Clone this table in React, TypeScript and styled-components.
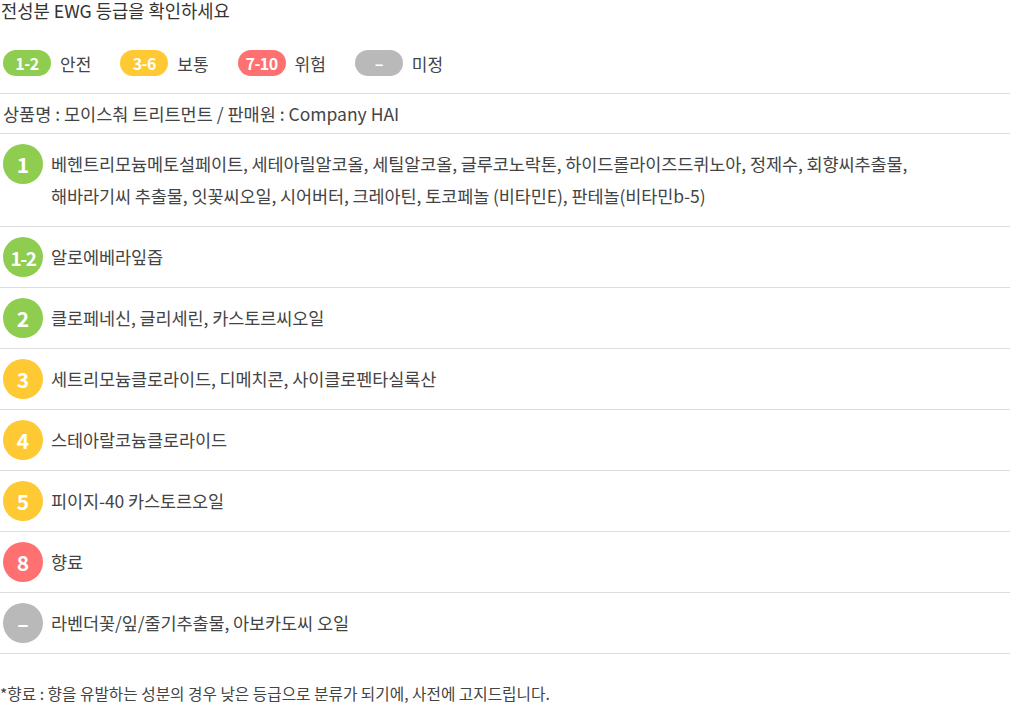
import React from "react";
import styled, { createGlobalStyle } from "styled-components";

type Grade = "safe" | "normal" | "danger" | "none";

const gradeColors: Record<Grade, string> = {
  safe: "#8ecd50",
  normal: "#ffc933",
  danger: "#ff7171",
  none: "#b9b9b9",
};

interface Ingredient {
  score: string;
  grade: Grade;
  names: string;
}

const legend: { label: string; text: string; grade: Grade }[] = [
  { label: "1-2", text: "안전", grade: "safe" },
  { label: "3-6", text: "보통", grade: "normal" },
  { label: "7-10", text: "위험", grade: "danger" },
  { label: "–", text: "미정", grade: "none" },
];

const ingredients: Ingredient[] = [
  {
    score: "1",
    grade: "safe",
    names:
      "베헨트리모늄메토설페이트, 세테아릴알코올, 세틸알코올, 글루코노락톤, 하이드롤라이즈드퀴노아, 정제수, 회향씨추출물, 해바라기씨 추출물, 잇꽃씨오일, 시어버터, 크레아틴, 토코페놀 (비타민E), 판테놀(비타민b-5)",
  },
  { score: "1-2", grade: "safe", names: "알로에베라잎즙" },
  { score: "2", grade: "safe", names: "클로페네신, 글리세린, 카스토르씨오일" },
  { score: "3", grade: "normal", names: "세트리모늄클로라이드, 디메치콘, 사이클로펜타실록산" },
  { score: "4", grade: "normal", names: "스테아랄코늄클로라이드" },
  { score: "5", grade: "normal", names: "피이지-40 카스토르오일" },
  { score: "8", grade: "danger", names: "향료" },
  { score: "–", grade: "none", names: "라벤더꽃/잎/줄기추출물, 아보카도씨 오일" },
];

const App = () => {
  return (
    <>
      <GlobalStyle />
      <Page>
        <Title>전성분 EWG 등급을 확인하세요</Title>
        <Legend>
          {legend.map((item) => (
            <LegendItem key={item.text}>
              <Pill $grade={item.grade}>{item.label}</Pill>
              <LegendText>{item.text}</LegendText>
            </LegendItem>
          ))}
        </Legend>
        <ProductInfo>상품명 : 모이스춰 트리트먼트 / 판매원 : Company HAI</ProductInfo>
        <List>
          {ingredients.map((item) => (
            <Row key={item.score}>
              <Badge $grade={item.grade} $small={item.score.length > 2}>
                {item.score}
              </Badge>
              <Names>{item.names}</Names>
            </Row>
          ))}
        </List>
        <Notice>
          <strong>*향료</strong> : 향을 유발하는 성분의 경우 낮은 등급으로 분류가 되기에, 사전에 고지드립니다.
        </Notice>
      </Page>
    </>
  );
};

export default App;

const GlobalStyle = createGlobalStyle`
  html, body {
    margin: 0;
    padding: 0;
    background: #fff;
  }
  body {
    font-family: "Noto Sans CJK KR", "Noto Sans", sans-serif;
    color: #444;
  }
`;

const Page = styled.div`
  width: 1010px;
  display: flex;
  flex-direction: column;
`;

const Title = styled.h2`
  margin: 0;
  padding-left: 1px;
  height: 22px;
  line-height: 21px;
  font-size: 17.7px;
  font-weight: 400;
  color: #333;
`;

const Legend = styled.div`
  display: flex;
  align-items: center;
  gap: 29px;
  padding: 28px 0 17px 3px;
  border-bottom: 1px solid #ddd;
`;

const LegendItem = styled.div`
  display: flex;
  align-items: center;
  gap: 9px;
`;

const Pill = styled.span<{ $grade: Grade }>`
  display: inline-flex;
  align-items: center;
  justify-content: center;
  min-width: 48px;
  height: 26px;
  padding: 0 4px;
  box-sizing: border-box;
  border-radius: 13px;
  background: ${({ $grade }) => gradeColors[$grade]};
  color: #fff;
  font-size: 16px;
  font-weight: 700;
  letter-spacing: -0.5px;
`;

const LegendText = styled.span`
  font-size: 17px;
  color: #444;
`;

const ProductInfo = styled.div`
  height: 39px;
  line-height: 39px;
  padding-left: 3px;
  font-size: 17.5px;
  color: #444;
  border-bottom: 1px solid #ddd;
`;

const List = styled.ul`
  list-style: none;
  margin: 0;
  padding: 0;
`;

const Row = styled.li`
  display: flex;
  align-items: flex-start;
  gap: 8px;
  padding: 10px 0 10px 3px;
  border-bottom: 1px solid #ddd;
`;

const Badge = styled.span<{ $grade: Grade; $small: boolean }>`
  flex: none;
  width: 40px;
  height: 40px;
  border-radius: 50%;
  display: flex;
  align-items: center;
  justify-content: center;
  background: ${({ $grade }) => gradeColors[$grade]};
  color: #fff;
  font-size: ${({ $small }) => ($small ? "19px" : "21px")};
  font-weight: 700;
  letter-spacing: ${({ $small }) => ($small ? "-1.5px" : "0")};
  white-space: nowrap;
`;

const Names = styled.p`
  margin: 0;
  padding: 4px 0;
  line-height: 32px;
  font-size: 17.5px;
  letter-spacing: -0.1px;
  color: #444;
  max-width: 900px;
  word-break: keep-all;
`;

const Notice = styled.p`
  margin: 0;
  padding-top: 29px;
  line-height: 22px;
  font-size: 15.7px;
  color: #444;

  strong {
    font-weight: 400;
  }
`;
